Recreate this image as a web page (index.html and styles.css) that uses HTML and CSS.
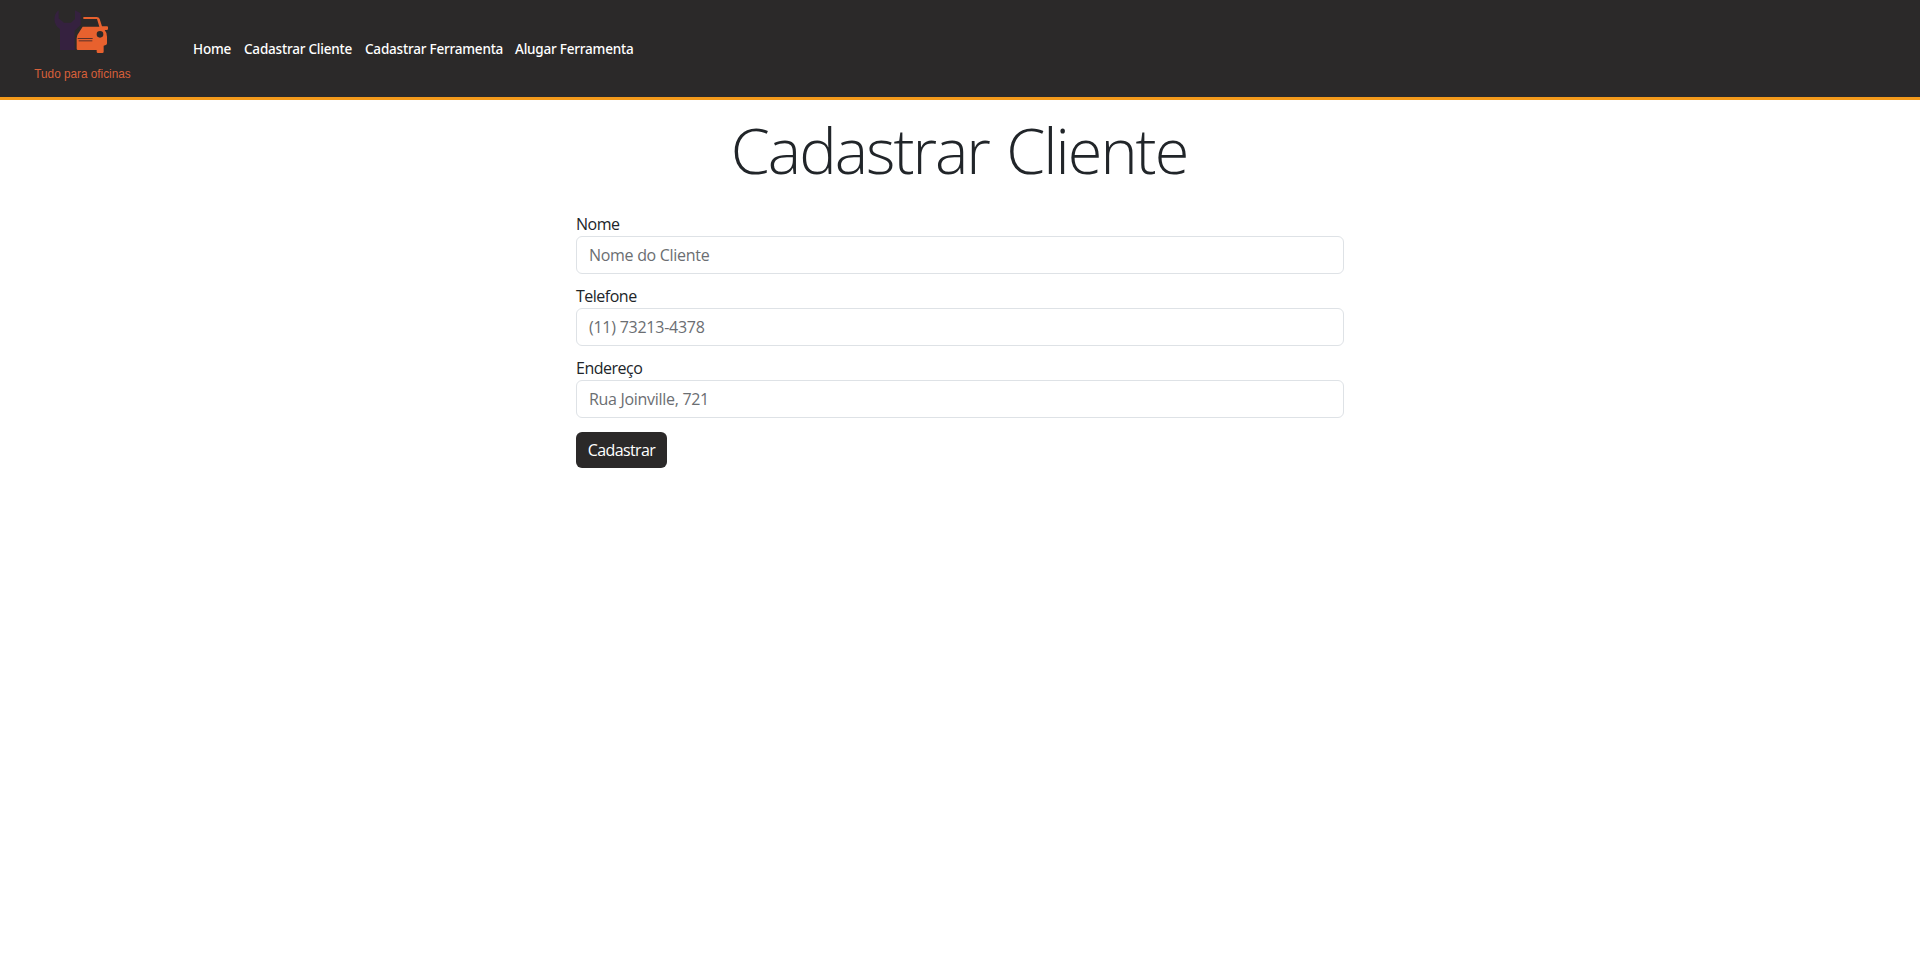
FILE: index.html
```html
<!DOCTYPE html>
<html lang="pt-BR">
<head>
<meta charset="utf-8">
<title>Cadastrar Cliente</title>
<link rel="stylesheet" href="styles.css">
</head>
<body>
<header class="navbar">
  <svg class="logo" viewBox="0 0 390 291" role="img" aria-label="Tudo para oficinas">
    <path class="wrench" d="M116 31C98 43 99 76 120 87V150H164V92L182 74V40L165 31V57L153 68H132L116 55Z"/>
    <path class="car" fill-rule="evenodd" d="M190 51H230Q237 51 239 57L246 79H261Q264 79 264 82V87Q264 90 260 90H254Q261 98 261 110V130Q261 136 251 137V155Q251 159 247 159H234Q230 159 230 155V150H174Q170 150 170 146V115Q170 105 176 99L188 80H238L231 57H190ZM240 93A10 10 0 1 0 240 113A10 10 0 1 0 240 93Z"/>
    <path class="grille" d="M173 115.5H218M176 122.5H217"/>
    <text class="tagline" x="43" y="233" textLength="289" lengthAdjust="spacingAndGlyphs">Tudo para oficinas</text>
  </svg>
  <nav class="links">
    <a class="link home">Home</a>
    <a class="link client">Cadastrar Cliente</a>
    <a class="link tool">Cadastrar Ferramenta</a>
    <a class="link rent">Alugar Ferramenta</a>
  </nav>
</header>
<main class="content">
  <h1 class="title">Cadastrar Cliente</h1>
  <form class="form">
    <div class="field"><label class="label" for="nome">Nome</label><input class="input" id="nome" placeholder="Nome do Cliente"></div>
    <div class="field"><label class="label" for="telefone">Telefone</label><input class="input phone" id="telefone" placeholder="(11) 73213-4378"></div>
    <div class="field"><label class="label" for="endereco">Endereço</label><input class="input" id="endereco" placeholder="Rua Joinville, 721"></div>
    <button class="submit" type="button">Cadastrar</button>
  </form>
</main>
</body>
</html>
```
FILE: styles.css
```css
* { box-sizing: border-box; }
body { margin: 0; background: #fff; color: #212529; font: 16px/24px "Open Sans", "Noto Sans", sans-serif; }
.navbar { display: flex; align-items: center; height: 100px; padding-left: 20px; background: #2b2929; border-bottom: 3px solid #f39a1b; }
.logo { width: 130px; height: 97px; flex: none; }
.wrench { fill: #35213f; }
.car { fill: #e8612e; }
.grille { fill: none; stroke: #35252a; stroke-width: 2.4; }
.tagline { fill: #d8603a; font: 37px "Liberation Sans", Arial, sans-serif; }
.links { display: flex; gap: 13px; margin-left: 43px; font-family: "Noto Sans", sans-serif; font-size: 13.5px; font-weight: 500; letter-spacing: -.2px; white-space: nowrap; }
.link { color: #fff; }
.home { width: 38px; }
.client { width: 108px; }
.tool { width: 137px; }
.content { width: 768px; margin: 0 auto; }
.title { margin: 0; padding: 11px 2px 0 0; text-align: center; font-size: 63px; line-height: 77px; font-weight: 300; letter-spacing: -2px; word-spacing: 3px; }
.form { padding-top: 24px; }
.field { display: flex; flex-direction: column; margin-bottom: 10px; letter-spacing: -.3px; }
.label { height: 24px; letter-spacing: -.5px; }
.input { height: 38px; padding: 6px 12px; border: 1px solid #dee2e6; border-radius: 6px; background: #fff; font: inherit; letter-spacing: inherit; }
.input::placeholder { color: #6b6e72; opacity: 1; }
.phone { letter-spacing: -.25px; }
.submit { display: block; width: 91px; height: 36px; margin-top: 14px; padding: 0; border: 0; border-radius: 6px; background: #2b2929; color: #fff; font: inherit; letter-spacing: -.6px; }
```
